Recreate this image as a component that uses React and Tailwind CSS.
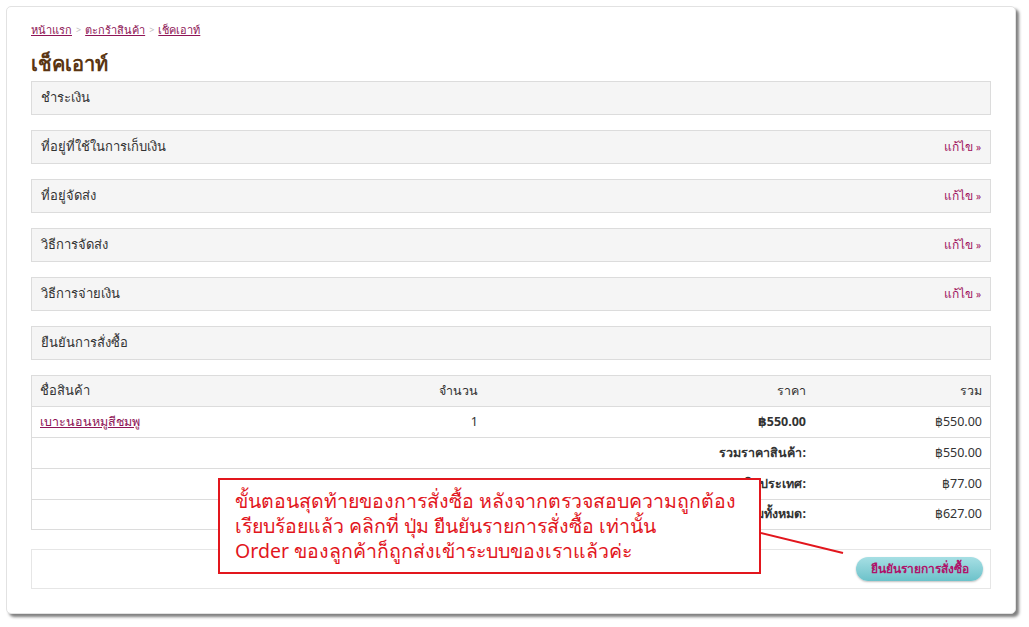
import React from 'react';

const sections = [
  { label: 'ชำระเงิน', edit: false },
  { label: 'ที่อยู่ที่ใช้ในการเก็บเงิน', edit: true },
  { label: 'ที่อยู่จัดส่ง', edit: true },
  { label: 'วิธีการจัดส่ง', edit: true },
  { label: 'วิธีการจ่ายเงิน', edit: true },
  { label: 'ยืนยันการสั่งซื้อ', edit: false },
];

const totals = [
  { label: 'รวมราคาสินค้า:', value: '฿550.00' },
  { label: 'EMS ในประเทศ:', value: '฿77.00' },
  { label: 'รวมทั้งหมด:', value: '฿627.00' },
];

const font = { fontFamily: 'Tahoma, "Noto Sans", "DejaVu Sans", sans-serif' };

const App = () => {
  return (
    <div className="w-[1029px] h-[627px] bg-white overflow-hidden" style={font}>
      <div className="relative ml-[6px] mt-[6px] w-[1010px] h-[608px] bg-white rounded-[5px] border border-[#e2e2e2] shadow-[3px_3px_3px_rgba(0,0,0,0.5)] px-[24px] pt-[15px]">
        {/* breadcrumb */}
        <div className="flex items-center gap-[4px] h-[16px] text-[11px] leading-[16px]">
          <a className="text-[#8e1456] underline">หน้าแรก</a>
          <span className="text-[#bbbbbb] text-[9px]">&gt;</span>
          <a className="text-[#8e1456] underline">ตะกร้าสินค้า</a>
          <span className="text-[#bbbbbb] text-[9px]">&gt;</span>
          <a className="text-[#8e1456] underline">เช็คเอาท์</a>
        </div>

        <h1 className="mt-[13px] mb-[4px] text-[20px] leading-[26px] font-bold text-[#5a3512]">เช็คเอาท์</h1>

        {/* checkout steps */}
        <div className="flex flex-col gap-[15px]">
          {sections.map((s, i) => (
            <div
              key={i}
              className="h-[34px] flex items-center justify-between bg-[#f5f5f5] border border-[#dcdcdc] pl-[9px] pr-[9px]"
            >
              <span className="text-[13px] text-[#333333]">{s.label}</span>
              {s.edit && (
                <a className="text-[12px] text-[#a0145f]">
                  แก้ไข <span className="text-[10px]">»</span>
                </a>
              )}
            </div>
          ))}
        </div>

        {/* order table */}
        <div className="mt-[15px] border border-[#dcdcdc] text-[12.5px] text-[#333333]">
          <div className="grid grid-cols-[1fr_157px_328px_176px] h-[31px] items-center bg-[#f5f5f5] border-b border-[#dcdcdc] px-[8px]">
            <span className="text-[13px]">ชื่อสินค้า</span>
            <span className="text-right">จำนวน</span>
            <span className="text-right">ราคา</span>
            <span className="text-right">รวม</span>
          </div>
          <div className="grid grid-cols-[1fr_157px_328px_176px] h-[31px] items-center border-b border-[#dcdcdc] px-[8px]">
            <a className="text-[#8e1456] underline">เบาะนอนหมูสีชมพู</a>
            <span className="text-right">1</span>
            <span className="text-right font-bold">฿550.00</span>
            <span className="text-right">฿550.00</span>
          </div>
          {totals.map((t, i) => (
            <div
              key={i}
              className={`grid grid-cols-[1fr_176px] items-center px-[8px] ${
                i < totals.length - 1 ? 'h-[31px] border-b border-[#dcdcdc]' : 'h-[29px]'
              }`}
            >
              <span className="text-right font-bold">{t.label}</span>
              <span className="text-right">{t.value}</span>
            </div>
          ))}
        </div>

        {/* confirm bar */}
        <div className="mt-[19px] h-[40px] border border-[#e6e6e6] flex items-center justify-end pr-[7px]">
          <button className="w-[127px] h-[24px] rounded-full bg-gradient-to-b from-[#a6dfe4] to-[#6cc2ca] shadow-[0_1px_2px_rgba(0,0,0,0.25)] text-[12px] font-bold text-[#b0126a]">
            ยืนยันรายการสั่งซื้อ
          </button>
        </div>

        {/* annotation callout */}
        <div className="absolute left-[211px] top-[471px] w-[543px] h-[96px] bg-white border-2 border-[#e2161d] pl-[15px] pt-[8px] text-[19.5px] leading-[25px] text-[#e2161d] whitespace-nowrap">
          <p>ขั้นตอนสุดท้ายของการสั่งซื้อ หลังจากตรวจสอบความถูกต้อง</p>
          <p>เรียบร้อยแล้ว คลิกที่ ปุ่ม ยืนยันรายการสั่งซื้อ เท่านั้น</p>
          <p>Order ของลูกค้าก็ถูกส่งเข้าระบบของเราแล้วค่ะ</p>
        </div>
        <svg className="absolute left-[754px] top-[524px]" width="84" height="24" viewBox="0 0 84 24">
          <line x1="0" y1="2" x2="82" y2="22" stroke="#e2161d" strokeWidth="2" />
        </svg>
      </div>
    </div>
  );
};

export default App;
